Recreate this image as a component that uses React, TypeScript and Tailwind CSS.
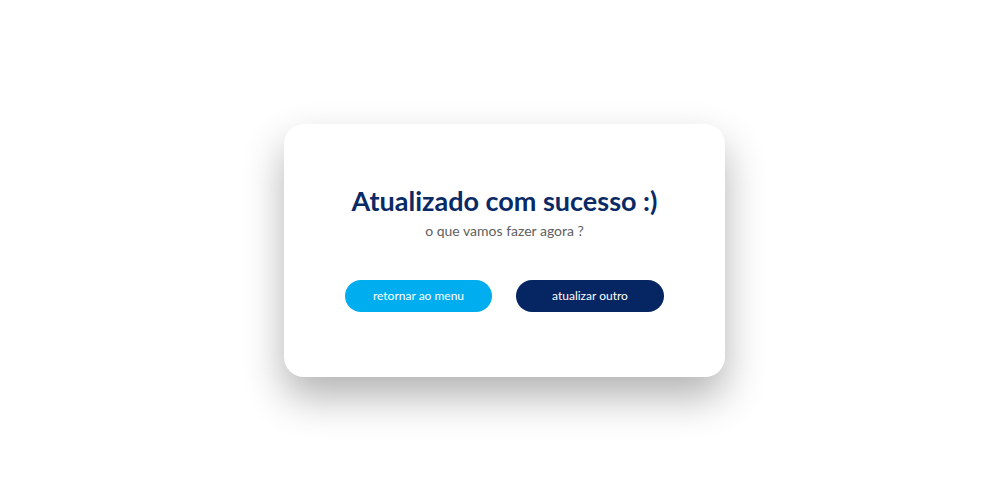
export default function App() {
  return (
    <div className="flex h-[500px] w-full items-center justify-center bg-white pl-[9px] font-['Lato',sans-serif]">
      <div className="flex h-[253px] w-[441px] flex-col items-center rounded-[20px] bg-white pt-[60px] shadow-[0_20px_40px_rgba(0,0,0,0.3)]">
        <h1 className="text-[27px] font-bold leading-[34px] text-[#0a2a66]">Atualizado com sucesso :)</h1>
        <p className="mt-[3px] text-[14px] leading-[20px] text-[#606060]">o que vamos fazer agora ?</p>
        <div className="mt-[39px] flex gap-[24px]">
          <button className="h-[32px] w-[147px] rounded-full bg-[#00aeef] text-[12px] text-white">retornar ao menu</button>
          <button className="h-[32px] w-[148px] rounded-full bg-[#062663] text-[12px] text-white">atualizar outro</button>
        </div>
      </div>
    </div>
  );
}
